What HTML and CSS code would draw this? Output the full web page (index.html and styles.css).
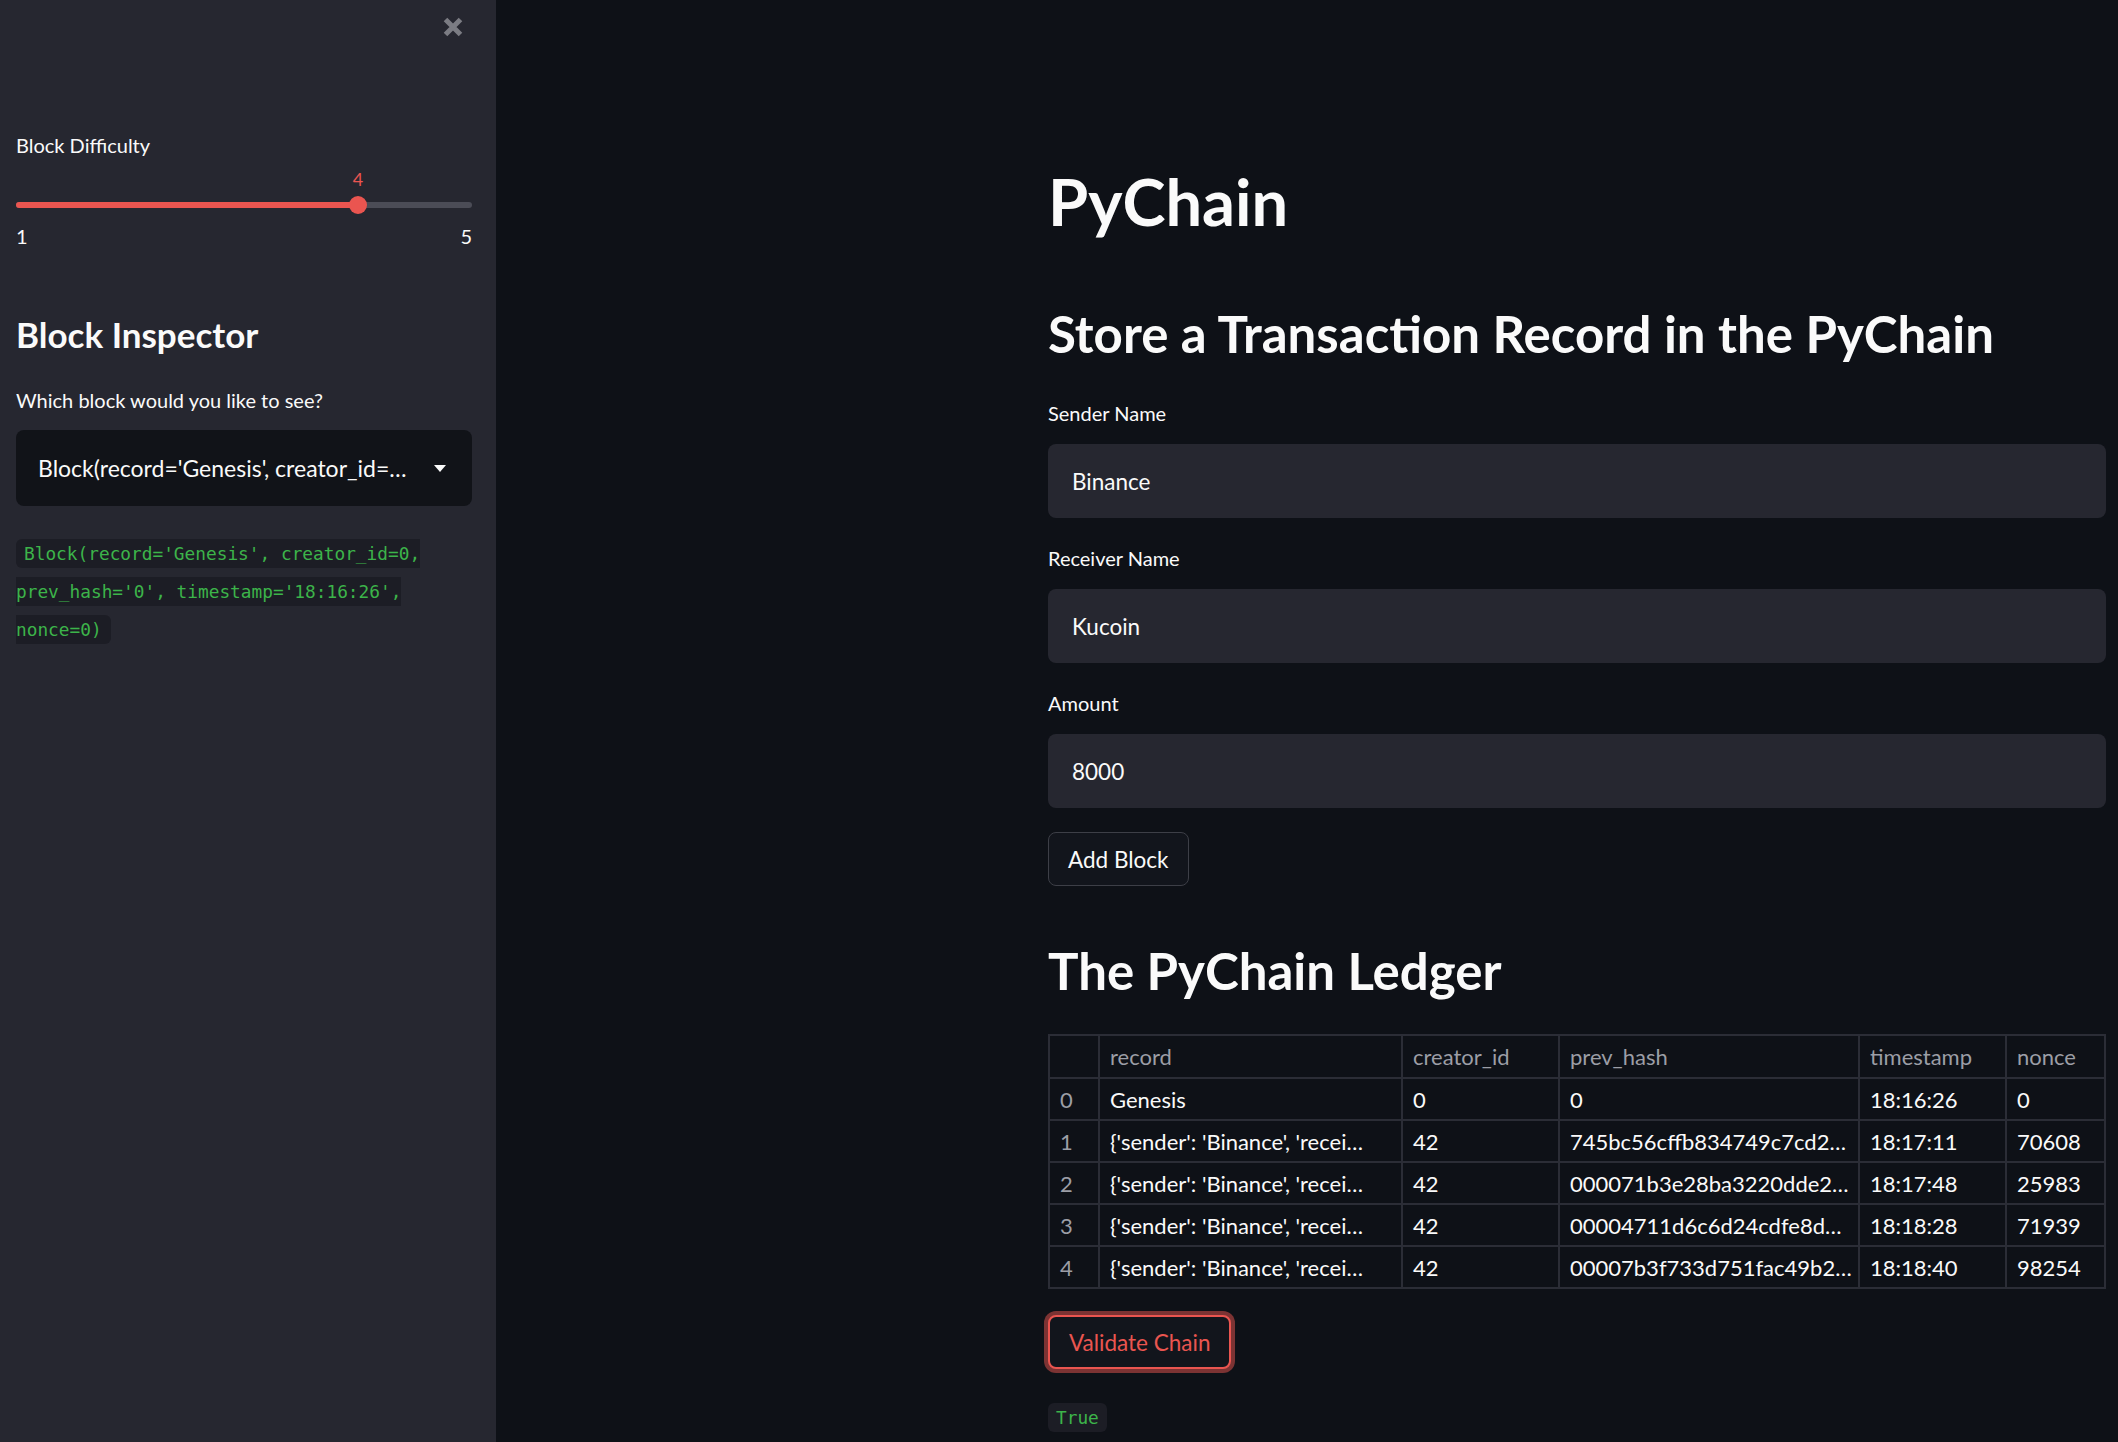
FILE: index.html
```html
<!DOCTYPE html>
<html lang="en">
<head>
<meta charset="utf-8">
<title>PyChain</title>
<link rel="stylesheet" href="styles.css">
</head>
<body>
<div class="app">
  <aside class="sidebar">
    <div class="sb-top">
      <button class="close-btn" aria-label="Close sidebar">
        <svg viewBox="0 0 22 22" width="22" height="22"><path d="M3.5 3.5 L18.5 18.5 M18.5 3.5 L3.5 18.5" stroke="#7b7c83" stroke-width="5" fill="none"/></svg>
      </button>
    </div>
    <div class="widget-label">Block Difficulty</div>
    <div class="slider">
      <div class="track"><div class="fill" style="width:75%"></div></div>
      <div class="thumb-value" style="left:75%">4</div>
      <div class="thumb" style="left:75%"></div>
    </div>
    <div class="range-labels"><span>1</span><span>5</span></div>
    <h2 class="sb-heading">Block Inspector</h2>
    <div class="widget-label">Which block would you like to see?</div>
    <div class="select">
      <span class="select-text">Block(record='Genesis', creator_id=…</span>
      <svg class="select-arrow" viewBox="0 0 12 7" width="12" height="7"><path d="M0 0 L12 0 L6 7 Z" fill="#fafafa"/></svg>
    </div>
    <p class="code-para"><code>Block(record='Genesis', creator_id=0, prev_hash='0', timestamp='18:16:26', nonce=0)</code></p>
  </aside>
  <main class="main">
    <h1 class="title">PyChain</h1>
    <h2 class="heading first">Store a Transaction Record in the PyChain</h2>
    <div class="field first-field">
      <div class="widget-label">Sender Name</div>
      <div class="input">Binance</div>
    </div>
    <div class="field">
      <div class="widget-label">Receiver Name</div>
      <div class="input">Kucoin</div>
    </div>
    <div class="field">
      <div class="widget-label">Amount</div>
      <div class="input">8000</div>
    </div>
    <button class="btn">Add Block</button>
    <h2 class="heading ledger">The PyChain Ledger</h2>
    <table class="ledger-table">
      <colgroup>
        <col style="width:50px"><col style="width:303px"><col style="width:157px"><col style="width:300px"><col style="width:147px"><col style="width:99px">
      </colgroup>
      <thead>
        <tr><th></th><th>record</th><th>creator_id</th><th>prev_hash</th><th>timestamp</th><th>nonce</th></tr>
      </thead>
      <tbody>
        <tr><td class="idx">0</td><td>Genesis</td><td>0</td><td>0</td><td>18:16:26</td><td>0</td></tr>
        <tr><td class="idx">1</td><td>{'sender': 'Binance', 'recei…</td><td>42</td><td>745bc56cffb834749c7cd2…</td><td>18:17:11</td><td>70608</td></tr>
        <tr><td class="idx">2</td><td>{'sender': 'Binance', 'recei…</td><td>42</td><td>000071b3e28ba3220dde2…</td><td>18:17:48</td><td>25983</td></tr>
        <tr><td class="idx">3</td><td>{'sender': 'Binance', 'recei…</td><td>42</td><td>00004711d6c6d24cdfe8d…</td><td>18:18:28</td><td>71939</td></tr>
        <tr><td class="idx">4</td><td>{'sender': 'Binance', 'recei…</td><td>42</td><td>00007b3f733d751fac49b2…</td><td>18:18:40</td><td>98254</td></tr>
      </tbody>
    </table>
    <button class="btn btn-focus">Validate Chain</button>
    <div class="result"><code>True</code></div>
  </main>
</div>
</body>
</html>
```
FILE: styles.css
```css
* { box-sizing: border-box; }
html, body { margin: 0; padding: 0; }
body {
  background: #0e1117;
  color: #fafafa;
  font-family: Lato, "Open Sans", sans-serif;
}
.app {
  display: flex;
  height: 1442px;
  overflow: hidden;
}
.sidebar {
  width: 496px;
  flex-shrink: 0;
  background: #262730;
  padding: 0 24px 0 16px;
}
.sb-top {
  height: 133px;
  display: flex;
  justify-content: flex-end;
  align-items: flex-start;
  padding-top: 16px;
  padding-right: 8px;
}
.close-btn {
  background: none;
  border: 0;
  padding: 0;
  width: 22px;
  height: 22px;
  display: block;
}
.close-btn svg { display: block; }
.widget-label {
  font-size: 20px;
  line-height: 24px;
  color: #fafafa;
}
.slider {
  position: relative;
  height: 67px;
}
.track {
  position: absolute;
  left: 0;
  right: 0;
  top: 45px;
  height: 6px;
  border-radius: 3px;
  background: #4b4c56;
  overflow: hidden;
}
.fill {
  height: 100%;
  background: #ea5550;
}
.thumb {
  position: absolute;
  top: 39px;
  width: 18px;
  height: 18px;
  margin-left: -9px;
  border-radius: 50%;
  background: #ea5550;
}
.thumb-value {
  position: absolute;
  top: 11px;
  transform: translateX(-50%);
  color: #ea5550;
  font-size: 18px;
  line-height: 22px;
}
.range-labels {
  display: flex;
  justify-content: space-between;
  font-size: 20px;
  line-height: 24px;
}
.sb-heading {
  margin: 65px 0 0;
  font-size: 35px;
  line-height: 42px;
  font-weight: 700;
}
.sb-heading + .widget-label { margin-top: 33px; }
.select {
  margin-top: 18px;
  height: 76px;
  background: #111318;
  border-radius: 8px;
  display: flex;
  align-items: center;
  justify-content: space-between;
  padding: 0 26px 0 22px;
}
.select-text {
  font-size: 23px;
  white-space: nowrap;
  overflow: hidden;
  text-overflow: ellipsis;
}
.select-arrow { flex-shrink: 0; }
.code-para {
  margin: 29px 0 0;
  line-height: 38px;
}
code {
  font-family: "DejaVu Sans Mono", "Liberation Mono", monospace;
  font-size: 17.8px;
  color: #3cb44a;
  background: #1c1d25;
  padding: 4px 8px;
  border-radius: 6px;
}
.code-para code { padding: 4px 9px 4px 8px; }

.main {
  flex: 1;
  padding: 163px 14px 0 552px;
}
.title {
  margin: 0;
  font-size: 65px;
  line-height: 76px;
  font-weight: 700;
}
.heading {
  margin: 0;
  font-size: 51px;
  line-height: 58px;
  font-weight: 700;
}
.heading.first { margin-top: 66px; }
.field { margin-top: 28px; }
.field.first-field { margin-top: 38px; }
.field .widget-label { margin-bottom: 19px; }
.input {
  height: 74px;
  background: #262730;
  border-radius: 8px;
  display: flex;
  align-items: center;
  padding-left: 24px;
  font-size: 22.5px;
}
.btn {
  display: block;
  margin-top: 24px;
  height: 54px;
  padding: 0 19px;
  background: #12151c;
  border: 1px solid #3d3f47;
  border-radius: 8px;
  color: #fafafa;
  font-family: inherit;
  font-size: 22.5px;
}
.heading.ledger { margin-top: 56px; }
.ledger-table {
  margin-top: 34px;
  border-collapse: collapse;
  table-layout: fixed;
  width: 1056px;
  border: 2px solid #2b2d36;
  font-size: 22px;
}
.ledger-table th, .ledger-table td {
  border: 2px solid #2b2d36;
  padding: 0 6px 0 10px;
  text-align: left;
  white-space: nowrap;
  overflow: hidden;
  text-overflow: ellipsis;
}
.ledger-table th {
  height: 43px;
  font-weight: 400;
  color: #9c9ea6;
}
.ledger-table td { height: 42px; }
.ledger-table td.idx { color: #9c9ea6; }
.btn-focus {
  margin-top: 26px;
  border: 2px solid #ea5550;
  color: #ea5550;
  box-shadow: 0 0 0 4px rgba(234, 85, 80, 0.5);
}
.result {
  margin-top: 35px;
  line-height: 28px;
}
.result code { padding: 4px 8px; }
```
